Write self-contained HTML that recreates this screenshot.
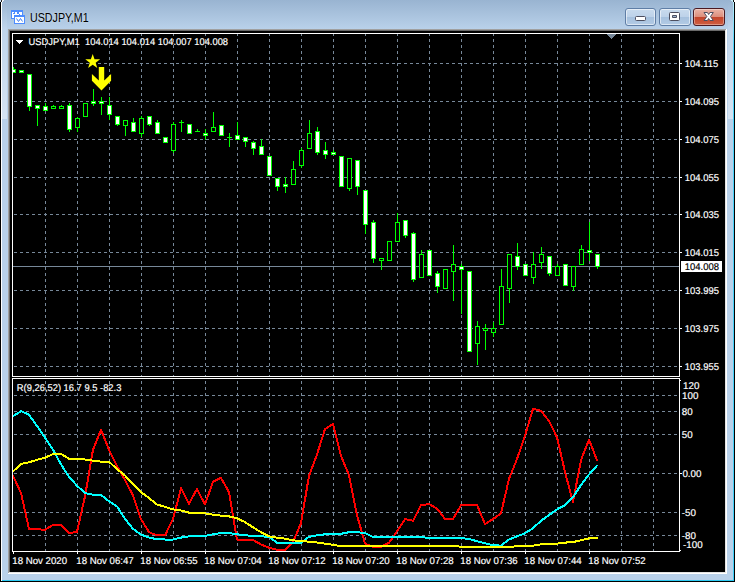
<!DOCTYPE html>
<html><head><meta charset="utf-8"><title>USDJPY,M1</title>
<style>
html,body{margin:0;padding:0;background:#fff;}
body{width:737px;height:583px;overflow:hidden;position:relative;font-family:"Liberation Sans",sans-serif;}
#win{position:absolute;left:0;top:0;width:735px;height:582px;background:#000;}
#frame{position:absolute;left:1px;top:0;width:733px;height:581px;background:#b9d1ea;}
#cap{position:absolute;left:0;top:0;width:733px;height:29px;background:linear-gradient(#99b4d1,#b9d1ea);}
#hl{position:absolute;left:0;top:0;width:1px;height:581px;background:#fff;}
#hr{position:absolute;right:0;top:0;width:1px;height:581px;background:linear-gradient(#c4f1fd 0px,#4ad4fb 45px,#3fcff8 100%);}
.gl{position:absolute;top:0;width:5px;height:119px;background:linear-gradient(rgba(255,255,255,0),rgba(255,255,255,.4));}
#hb{position:absolute;left:1px;bottom:0;width:732px;height:1px;background:#2ccaf2;}
#title{position:absolute;left:30px;top:9.5px;font-size:12.5px;line-height:16px;color:#000;white-space:nowrap;transform:scaleX(0.855);transform-origin:0 0;text-shadow:0 0 3px rgba(255,255,255,.6);}
.btn{position:absolute;top:8px;height:16px;width:29px;border:1px solid #5f7ea6;border-radius:3px;box-shadow:inset 0 0 0 1px rgba(255,255,255,.55);}
#bmin,#bmax{background:linear-gradient(#c9dbee 0%,#bdd2e9 48%,#a6c1de 52%,#b3cbe5 100%);}
#bmin{left:625px;} #bmax{left:659px;width:30px;}
#bcl{left:693px;width:30px;border-color:#4b1a22;background:linear-gradient(#eab4a6 0%,#dd8f7d 48%,#c4452b 52%,#cf5f42 100%);box-shadow:inset 0 0 0 1px rgba(255,255,255,.35);}
#edge{position:absolute;left:8px;top:29px;width:719px;height:545px;background:#fff;}
#e1{position:absolute;left:0;top:0;width:718px;height:544px;background:#a0a0a0;}
#e2{position:absolute;left:1px;top:1px;width:717px;height:543px;background:#e3e3e3;}
#e3{position:absolute;left:1px;top:1px;width:716px;height:542px;background:#696969;}
#cl{position:absolute;left:2px;top:2px;width:715px;height:541px;background:#000;}
svg{position:absolute;left:0;top:0;}
</style></head><body>
<div id="win"><div id="frame"><div id="cap"></div><div id="hl"></div><div id="hr"></div><div id="hb"></div><div class="gl" style="left:1px"></div><div class="gl" style="left:727px"></div></div>
<div id="edge"><div id="e1"></div><div id="e2"></div><div id="e3"></div><div id="cl"></div></div>
<div id="title">USDJPY,M1</div>
<div class="btn" id="bmin"></div><div class="btn" id="bmax"></div><div class="btn" id="bcl"></div>
</div>
<svg width="737" height="583" viewBox="0 0 737 583">
<defs><clipPath id="cm"><rect x="13" y="34" width="666" height="342"/></clipPath>
<clipPath id="cs"><rect x="13" y="379" width="666" height="172"/></clipPath></defs>
<g shape-rendering="crispEdges"><rect x="0" y="0" width="1" height="2" fill="#cfe3f7"/><rect x="1" y="0" width="1" height="2" fill="#222"/><rect x="2" y="0" width="2" height="1" fill="#e8eef5"/><rect x="2" y="1" width="1" height="1" fill="#fff"/>
<rect x="733" y="0" width="1" height="2" fill="#111"/><rect x="734" y="0" width="1" height="2" fill="#fff"/><rect x="731" y="0" width="2" height="1" fill="#c8f0fb"/><rect x="732" y="1" width="1" height="1" fill="#c8f0fb"/></g>
<g shape-rendering="crispEdges">
<rect x="11" y="10" width="12" height="9" fill="#4d8dff"/><rect x="12" y="12" width="10" height="6" fill="#fff"/>
<rect x="13" y="13" width="2" height="1" fill="#4d8dff"/><rect x="14" y="12" width="1" height="1" fill="#4d8dff"/><rect x="17" y="12" width="2" height="2" fill="#4d8dff"/><rect x="19" y="14" width="1" height="1" fill="#4d8dff"/>
<rect x="14" y="15" width="11" height="9" fill="#4d8dff"/><rect x="15" y="17" width="9" height="6" fill="#fff"/>
<path d="M16.5 18.5L18.5 21.5L20.5 18.5L22.5 21.5" stroke="#3f7df0" stroke-width="1" fill="none" shape-rendering="auto"/>
</g>
<g stroke-linejoin="round">
<rect x="635.5" y="16.5" width="10" height="4" rx="1" fill="#fff" stroke="#4d4f60" stroke-width="1"/>
<rect x="669.5" y="12.5" width="10" height="8" rx="1" fill="#fff" stroke="#4d4f60" stroke-width="1"/><rect x="672.5" y="15.5" width="4" height="2" fill="#9fb6d0" stroke="#4d4f60" stroke-width="1"/>
<polygon points="704,12.5 707.4,12.5 708.65,14.5 709.9,12.5 713.3,12.5 710.5,16.5 713.3,20.5 709.9,20.5 708.65,18.5 707.4,20.5 704,20.5 706.8,16.5" fill="#fff" stroke="#4d4f60" stroke-width="1"/>
</g>
<g shape-rendering="crispEdges">
<path d="M13 63.5H679" stroke="#778899" stroke-width="1" stroke-dasharray="3 3" stroke-dashoffset="5" fill="none"/>
<path d="M13 101.5H679" stroke="#778899" stroke-width="1" stroke-dasharray="3 3" stroke-dashoffset="5" fill="none"/>
<path d="M13 139.5H679" stroke="#778899" stroke-width="1" stroke-dasharray="3 3" stroke-dashoffset="5" fill="none"/>
<path d="M13 177.5H679" stroke="#778899" stroke-width="1" stroke-dasharray="3 3" stroke-dashoffset="5" fill="none"/>
<path d="M13 214.5H679" stroke="#778899" stroke-width="1" stroke-dasharray="3 3" stroke-dashoffset="5" fill="none"/>
<path d="M13 252.5H679" stroke="#778899" stroke-width="1" stroke-dasharray="3 3" stroke-dashoffset="5" fill="none"/>
<path d="M13 290.5H679" stroke="#778899" stroke-width="1" stroke-dasharray="3 3" stroke-dashoffset="5" fill="none"/>
<path d="M13 328.5H679" stroke="#778899" stroke-width="1" stroke-dasharray="3 3" stroke-dashoffset="5" fill="none"/>
<path d="M13 366.5H679" stroke="#778899" stroke-width="1" stroke-dasharray="3 3" stroke-dashoffset="5" fill="none"/>
<path d="M45.5 34V376" stroke="#778899" stroke-width="1" stroke-dasharray="3 3" stroke-dashoffset="1" fill="none"/>
<path d="M77.5 34V376" stroke="#778899" stroke-width="1" stroke-dasharray="3 3" stroke-dashoffset="1" fill="none"/>
<path d="M109.5 34V376" stroke="#778899" stroke-width="1" stroke-dasharray="3 3" stroke-dashoffset="1" fill="none"/>
<path d="M141.5 34V376" stroke="#778899" stroke-width="1" stroke-dasharray="3 3" stroke-dashoffset="1" fill="none"/>
<path d="M173.5 34V376" stroke="#778899" stroke-width="1" stroke-dasharray="3 3" stroke-dashoffset="1" fill="none"/>
<path d="M205.5 34V376" stroke="#778899" stroke-width="1" stroke-dasharray="3 3" stroke-dashoffset="1" fill="none"/>
<path d="M237.5 34V376" stroke="#778899" stroke-width="1" stroke-dasharray="3 3" stroke-dashoffset="1" fill="none"/>
<path d="M269.5 34V376" stroke="#778899" stroke-width="1" stroke-dasharray="3 3" stroke-dashoffset="1" fill="none"/>
<path d="M301.5 34V376" stroke="#778899" stroke-width="1" stroke-dasharray="3 3" stroke-dashoffset="1" fill="none"/>
<path d="M333.5 34V376" stroke="#778899" stroke-width="1" stroke-dasharray="3 3" stroke-dashoffset="1" fill="none"/>
<path d="M365.5 34V376" stroke="#778899" stroke-width="1" stroke-dasharray="3 3" stroke-dashoffset="1" fill="none"/>
<path d="M397.5 34V376" stroke="#778899" stroke-width="1" stroke-dasharray="3 3" stroke-dashoffset="1" fill="none"/>
<path d="M429.5 34V376" stroke="#778899" stroke-width="1" stroke-dasharray="3 3" stroke-dashoffset="1" fill="none"/>
<path d="M461.5 34V376" stroke="#778899" stroke-width="1" stroke-dasharray="3 3" stroke-dashoffset="1" fill="none"/>
<path d="M493.5 34V376" stroke="#778899" stroke-width="1" stroke-dasharray="3 3" stroke-dashoffset="1" fill="none"/>
<path d="M525.5 34V376" stroke="#778899" stroke-width="1" stroke-dasharray="3 3" stroke-dashoffset="1" fill="none"/>
<path d="M557.5 34V376" stroke="#778899" stroke-width="1" stroke-dasharray="3 3" stroke-dashoffset="1" fill="none"/>
<path d="M589.5 34V376" stroke="#778899" stroke-width="1" stroke-dasharray="3 3" stroke-dashoffset="1" fill="none"/>
<path d="M621.5 34V376" stroke="#778899" stroke-width="1" stroke-dasharray="3 3" stroke-dashoffset="1" fill="none"/>
<path d="M653.5 34V376" stroke="#778899" stroke-width="1" stroke-dasharray="3 3" stroke-dashoffset="1" fill="none"/>
<path d="M13 395.5H679" stroke="#778899" stroke-width="1" stroke-dasharray="3 3" stroke-dashoffset="5" fill="none"/>
<path d="M13 411.5H679" stroke="#778899" stroke-width="1" stroke-dasharray="3 3" stroke-dashoffset="5" fill="none"/>
<path d="M13 434.5H679" stroke="#778899" stroke-width="1" stroke-dasharray="3 3" stroke-dashoffset="5" fill="none"/>
<path d="M13 473.5H679" stroke="#778899" stroke-width="1" stroke-dasharray="3 3" stroke-dashoffset="5" fill="none"/>
<path d="M13 512.5H679" stroke="#778899" stroke-width="1" stroke-dasharray="3 3" stroke-dashoffset="5" fill="none"/>
<path d="M13 535.5H679" stroke="#778899" stroke-width="1" stroke-dasharray="3 3" stroke-dashoffset="5" fill="none"/>
<path d="M45.5 379V551" stroke="#778899" stroke-width="1" stroke-dasharray="3 3" stroke-dashoffset="4" fill="none"/>
<path d="M77.5 379V551" stroke="#778899" stroke-width="1" stroke-dasharray="3 3" stroke-dashoffset="4" fill="none"/>
<path d="M109.5 379V551" stroke="#778899" stroke-width="1" stroke-dasharray="3 3" stroke-dashoffset="4" fill="none"/>
<path d="M141.5 379V551" stroke="#778899" stroke-width="1" stroke-dasharray="3 3" stroke-dashoffset="4" fill="none"/>
<path d="M173.5 379V551" stroke="#778899" stroke-width="1" stroke-dasharray="3 3" stroke-dashoffset="4" fill="none"/>
<path d="M205.5 379V551" stroke="#778899" stroke-width="1" stroke-dasharray="3 3" stroke-dashoffset="4" fill="none"/>
<path d="M237.5 379V551" stroke="#778899" stroke-width="1" stroke-dasharray="3 3" stroke-dashoffset="4" fill="none"/>
<path d="M269.5 379V551" stroke="#778899" stroke-width="1" stroke-dasharray="3 3" stroke-dashoffset="4" fill="none"/>
<path d="M301.5 379V551" stroke="#778899" stroke-width="1" stroke-dasharray="3 3" stroke-dashoffset="4" fill="none"/>
<path d="M333.5 379V551" stroke="#778899" stroke-width="1" stroke-dasharray="3 3" stroke-dashoffset="4" fill="none"/>
<path d="M365.5 379V551" stroke="#778899" stroke-width="1" stroke-dasharray="3 3" stroke-dashoffset="4" fill="none"/>
<path d="M397.5 379V551" stroke="#778899" stroke-width="1" stroke-dasharray="3 3" stroke-dashoffset="4" fill="none"/>
<path d="M429.5 379V551" stroke="#778899" stroke-width="1" stroke-dasharray="3 3" stroke-dashoffset="4" fill="none"/>
<path d="M461.5 379V551" stroke="#778899" stroke-width="1" stroke-dasharray="3 3" stroke-dashoffset="4" fill="none"/>
<path d="M493.5 379V551" stroke="#778899" stroke-width="1" stroke-dasharray="3 3" stroke-dashoffset="4" fill="none"/>
<path d="M525.5 379V551" stroke="#778899" stroke-width="1" stroke-dasharray="3 3" stroke-dashoffset="4" fill="none"/>
<path d="M557.5 379V551" stroke="#778899" stroke-width="1" stroke-dasharray="3 3" stroke-dashoffset="4" fill="none"/>
<path d="M589.5 379V551" stroke="#778899" stroke-width="1" stroke-dasharray="3 3" stroke-dashoffset="4" fill="none"/>
<path d="M621.5 379V551" stroke="#778899" stroke-width="1" stroke-dasharray="3 3" stroke-dashoffset="4" fill="none"/>
<path d="M653.5 379V551" stroke="#778899" stroke-width="1" stroke-dasharray="3 3" stroke-dashoffset="4" fill="none"/>
<rect x="13" y="266" width="666" height="1" fill="#778899"/>
<g clip-path="url(#cm)">
<rect x="13" y="67" width="1" height="6" fill="#00ff00"/>
<rect x="11" y="69" width="5" height="4" fill="#00ff00"/>
<rect x="12" y="70" width="3" height="2" fill="#fff"/>
<rect x="21" y="70" width="1" height="3" fill="#00ff00"/>
<rect x="19" y="70" width="5" height="3" fill="#00ff00"/>
<rect x="20" y="71" width="3" height="1" fill="#fff"/>
<rect x="29" y="74" width="1" height="37" fill="#00ff00"/>
<rect x="27" y="74" width="5" height="33" fill="#00ff00"/>
<rect x="28" y="75" width="3" height="31" fill="#fff"/>
<rect x="37" y="105" width="1" height="21" fill="#00ff00"/>
<rect x="35" y="105" width="5" height="4" fill="#00ff00"/>
<rect x="36" y="106" width="3" height="2" fill="#fff"/>
<rect x="45" y="103" width="1" height="8" fill="#00ff00"/>
<rect x="43" y="106" width="5" height="5" fill="#00ff00"/>
<rect x="44" y="107" width="3" height="3" fill="#fff"/>
<rect x="53" y="105" width="1" height="4" fill="#00ff00"/>
<rect x="51" y="106" width="5" height="3" fill="#00ff00"/>
<rect x="52" y="107" width="3" height="1" fill="#000"/>
<rect x="61" y="105" width="1" height="4" fill="#00ff00"/>
<rect x="59" y="106" width="5" height="3" fill="#00ff00"/>
<rect x="60" y="107" width="3" height="1" fill="#000"/>
<rect x="69" y="103" width="1" height="29" fill="#00ff00"/>
<rect x="67" y="105" width="5" height="25" fill="#00ff00"/>
<rect x="68" y="106" width="3" height="23" fill="#fff"/>
<rect x="77" y="117" width="1" height="15" fill="#00ff00"/>
<rect x="75" y="118" width="5" height="10" fill="#00ff00"/>
<rect x="76" y="119" width="3" height="8" fill="#000"/>
<rect x="85" y="103" width="1" height="14" fill="#00ff00"/>
<rect x="83" y="103" width="5" height="14" fill="#00ff00"/>
<rect x="84" y="104" width="3" height="12" fill="#000"/>
<rect x="93" y="89" width="1" height="17" fill="#00ff00"/>
<rect x="91" y="101" width="5" height="3" fill="#00ff00"/>
<rect x="92" y="102" width="3" height="1" fill="#fff"/>
<rect x="101" y="97" width="1" height="18" fill="#00ff00"/>
<rect x="99" y="101" width="5" height="3" fill="#00ff00"/>
<rect x="100" y="102" width="3" height="1" fill="#fff"/>
<rect x="109" y="97" width="1" height="23" fill="#00ff00"/>
<rect x="107" y="105" width="5" height="10" fill="#00ff00"/>
<rect x="108" y="106" width="3" height="8" fill="#fff"/>
<rect x="117" y="116" width="1" height="10" fill="#00ff00"/>
<rect x="115" y="116" width="5" height="9" fill="#00ff00"/>
<rect x="116" y="117" width="3" height="7" fill="#fff"/>
<rect x="125" y="120" width="1" height="16" fill="#00ff00"/>
<rect x="123" y="120" width="5" height="6" fill="#00ff00"/>
<rect x="124" y="121" width="3" height="4" fill="#000"/>
<rect x="133" y="118" width="1" height="14" fill="#00ff00"/>
<rect x="131" y="122" width="5" height="10" fill="#00ff00"/>
<rect x="132" y="123" width="3" height="8" fill="#fff"/>
<rect x="141" y="116" width="1" height="21" fill="#00ff00"/>
<rect x="139" y="118" width="5" height="16" fill="#00ff00"/>
<rect x="140" y="119" width="3" height="14" fill="#000"/>
<rect x="149" y="116" width="1" height="10" fill="#00ff00"/>
<rect x="147" y="116" width="5" height="9" fill="#00ff00"/>
<rect x="148" y="117" width="3" height="7" fill="#fff"/>
<rect x="157" y="120" width="1" height="14" fill="#00ff00"/>
<rect x="155" y="122" width="5" height="12" fill="#00ff00"/>
<rect x="156" y="123" width="3" height="10" fill="#fff"/>
<rect x="165" y="137" width="1" height="6" fill="#00ff00"/>
<rect x="163" y="137" width="5" height="6" fill="#00ff00"/>
<rect x="164" y="138" width="3" height="4" fill="#fff"/>
<rect x="173" y="122" width="1" height="31" fill="#00ff00"/>
<rect x="171" y="124" width="5" height="27" fill="#00ff00"/>
<rect x="172" y="125" width="3" height="25" fill="#000"/>
<rect x="181" y="120" width="1" height="12" fill="#00ff00"/>
<rect x="179" y="122" width="5" height="1" fill="#00ff00"/>
<rect x="189" y="124" width="1" height="10" fill="#00ff00"/>
<rect x="187" y="124" width="5" height="10" fill="#00ff00"/>
<rect x="188" y="125" width="3" height="8" fill="#fff"/>
<rect x="197" y="129" width="1" height="3" fill="#00ff00"/>
<rect x="195" y="131" width="5" height="1" fill="#00ff00"/>
<rect x="205" y="129" width="1" height="11" fill="#00ff00"/>
<rect x="203" y="133" width="5" height="3" fill="#00ff00"/>
<rect x="204" y="134" width="3" height="1" fill="#fff"/>
<rect x="213" y="112" width="1" height="20" fill="#00ff00"/>
<rect x="211" y="127" width="5" height="5" fill="#00ff00"/>
<rect x="212" y="128" width="3" height="3" fill="#000"/>
<rect x="221" y="125" width="1" height="11" fill="#00ff00"/>
<rect x="219" y="125" width="5" height="11" fill="#00ff00"/>
<rect x="220" y="126" width="3" height="9" fill="#fff"/>
<rect x="229" y="133" width="1" height="14" fill="#00ff00"/>
<rect x="227" y="137" width="5" height="1" fill="#00ff00"/>
<rect x="237" y="122" width="1" height="18" fill="#00ff00"/>
<rect x="235" y="135" width="5" height="5" fill="#00ff00"/>
<rect x="236" y="136" width="3" height="3" fill="#fff"/>
<rect x="245" y="137" width="1" height="10" fill="#00ff00"/>
<rect x="243" y="137" width="5" height="5" fill="#00ff00"/>
<rect x="244" y="138" width="3" height="3" fill="#fff"/>
<rect x="253" y="141" width="1" height="14" fill="#00ff00"/>
<rect x="251" y="142" width="5" height="7" fill="#00ff00"/>
<rect x="252" y="143" width="3" height="5" fill="#fff"/>
<rect x="261" y="139" width="1" height="16" fill="#00ff00"/>
<rect x="259" y="146" width="5" height="9" fill="#00ff00"/>
<rect x="260" y="147" width="3" height="7" fill="#fff"/>
<rect x="269" y="156" width="1" height="20" fill="#00ff00"/>
<rect x="267" y="156" width="5" height="20" fill="#00ff00"/>
<rect x="268" y="157" width="3" height="18" fill="#fff"/>
<rect x="277" y="178" width="1" height="13" fill="#00ff00"/>
<rect x="275" y="178" width="5" height="9" fill="#00ff00"/>
<rect x="276" y="179" width="3" height="7" fill="#fff"/>
<rect x="285" y="177" width="1" height="16" fill="#00ff00"/>
<rect x="283" y="184" width="5" height="3" fill="#00ff00"/>
<rect x="284" y="185" width="3" height="1" fill="#fff"/>
<rect x="293" y="161" width="1" height="24" fill="#00ff00"/>
<rect x="291" y="169" width="5" height="16" fill="#00ff00"/>
<rect x="292" y="170" width="3" height="14" fill="#000"/>
<rect x="301" y="148" width="1" height="20" fill="#00ff00"/>
<rect x="299" y="150" width="5" height="16" fill="#00ff00"/>
<rect x="300" y="151" width="3" height="14" fill="#000"/>
<rect x="309" y="120" width="1" height="29" fill="#00ff00"/>
<rect x="307" y="133" width="5" height="16" fill="#00ff00"/>
<rect x="308" y="134" width="3" height="14" fill="#000"/>
<rect x="317" y="127" width="1" height="28" fill="#00ff00"/>
<rect x="315" y="131" width="5" height="22" fill="#00ff00"/>
<rect x="316" y="132" width="3" height="20" fill="#fff"/>
<rect x="325" y="142" width="1" height="17" fill="#00ff00"/>
<rect x="323" y="150" width="5" height="5" fill="#00ff00"/>
<rect x="324" y="151" width="3" height="3" fill="#fff"/>
<rect x="333" y="150" width="1" height="5" fill="#00ff00"/>
<rect x="331" y="152" width="5" height="3" fill="#00ff00"/>
<rect x="332" y="153" width="3" height="1" fill="#fff"/>
<rect x="341" y="156" width="1" height="31" fill="#00ff00"/>
<rect x="339" y="156" width="5" height="31" fill="#00ff00"/>
<rect x="340" y="157" width="3" height="29" fill="#fff"/>
<rect x="349" y="158" width="1" height="33" fill="#00ff00"/>
<rect x="347" y="158" width="5" height="31" fill="#00ff00"/>
<rect x="348" y="159" width="3" height="29" fill="#000"/>
<rect x="357" y="160" width="1" height="35" fill="#00ff00"/>
<rect x="355" y="160" width="5" height="27" fill="#00ff00"/>
<rect x="356" y="161" width="3" height="25" fill="#fff"/>
<rect x="365" y="190" width="1" height="44" fill="#00ff00"/>
<rect x="363" y="190" width="5" height="35" fill="#00ff00"/>
<rect x="364" y="191" width="3" height="33" fill="#fff"/>
<rect x="373" y="220" width="1" height="43" fill="#00ff00"/>
<rect x="371" y="222" width="5" height="37" fill="#00ff00"/>
<rect x="372" y="223" width="3" height="35" fill="#fff"/>
<rect x="381" y="258" width="1" height="12" fill="#00ff00"/>
<rect x="379" y="258" width="5" height="3" fill="#00ff00"/>
<rect x="380" y="259" width="3" height="1" fill="#000"/>
<rect x="389" y="241" width="1" height="20" fill="#00ff00"/>
<rect x="387" y="241" width="5" height="20" fill="#00ff00"/>
<rect x="388" y="242" width="3" height="18" fill="#000"/>
<rect x="397" y="213" width="1" height="29" fill="#00ff00"/>
<rect x="395" y="222" width="5" height="20" fill="#00ff00"/>
<rect x="396" y="223" width="3" height="18" fill="#000"/>
<rect x="405" y="220" width="1" height="18" fill="#00ff00"/>
<rect x="403" y="220" width="5" height="16" fill="#00ff00"/>
<rect x="404" y="221" width="3" height="14" fill="#fff"/>
<rect x="413" y="232" width="1" height="50" fill="#00ff00"/>
<rect x="411" y="233" width="5" height="47" fill="#00ff00"/>
<rect x="412" y="234" width="3" height="45" fill="#fff"/>
<rect x="421" y="250" width="1" height="28" fill="#00ff00"/>
<rect x="419" y="254" width="5" height="24" fill="#00ff00"/>
<rect x="420" y="255" width="3" height="22" fill="#000"/>
<rect x="429" y="250" width="1" height="26" fill="#00ff00"/>
<rect x="427" y="250" width="5" height="26" fill="#00ff00"/>
<rect x="428" y="251" width="3" height="24" fill="#fff"/>
<rect x="437" y="271" width="1" height="22" fill="#00ff00"/>
<rect x="435" y="273" width="5" height="14" fill="#00ff00"/>
<rect x="436" y="274" width="3" height="12" fill="#fff"/>
<rect x="445" y="269" width="1" height="20" fill="#00ff00"/>
<rect x="443" y="269" width="5" height="20" fill="#00ff00"/>
<rect x="444" y="270" width="3" height="18" fill="#000"/>
<rect x="453" y="245" width="1" height="56" fill="#00ff00"/>
<rect x="451" y="264" width="5" height="8" fill="#00ff00"/>
<rect x="452" y="265" width="3" height="6" fill="#000"/>
<rect x="461" y="264" width="1" height="50" fill="#00ff00"/>
<rect x="459" y="266" width="5" height="4" fill="#00ff00"/>
<rect x="460" y="267" width="3" height="2" fill="#fff"/>
<rect x="469" y="271" width="1" height="81" fill="#00ff00"/>
<rect x="467" y="271" width="5" height="81" fill="#00ff00"/>
<rect x="468" y="272" width="3" height="79" fill="#fff"/>
<rect x="477" y="321" width="1" height="44" fill="#00ff00"/>
<rect x="475" y="326" width="5" height="18" fill="#00ff00"/>
<rect x="476" y="327" width="3" height="16" fill="#000"/>
<rect x="485" y="324" width="1" height="26" fill="#00ff00"/>
<rect x="483" y="328" width="5" height="3" fill="#00ff00"/>
<rect x="484" y="329" width="3" height="1" fill="#000"/>
<rect x="493" y="322" width="1" height="15" fill="#00ff00"/>
<rect x="491" y="328" width="5" height="5" fill="#00ff00"/>
<rect x="492" y="329" width="3" height="3" fill="#000"/>
<rect x="501" y="269" width="1" height="56" fill="#00ff00"/>
<rect x="499" y="286" width="5" height="39" fill="#00ff00"/>
<rect x="500" y="287" width="3" height="37" fill="#000"/>
<rect x="509" y="254" width="1" height="49" fill="#00ff00"/>
<rect x="507" y="254" width="5" height="35" fill="#00ff00"/>
<rect x="508" y="255" width="3" height="33" fill="#000"/>
<rect x="517" y="243" width="1" height="27" fill="#00ff00"/>
<rect x="515" y="256" width="5" height="11" fill="#00ff00"/>
<rect x="516" y="257" width="3" height="9" fill="#fff"/>
<rect x="525" y="264" width="1" height="12" fill="#00ff00"/>
<rect x="523" y="264" width="5" height="12" fill="#00ff00"/>
<rect x="524" y="265" width="3" height="10" fill="#fff"/>
<rect x="533" y="252" width="1" height="32" fill="#00ff00"/>
<rect x="531" y="264" width="5" height="14" fill="#00ff00"/>
<rect x="532" y="265" width="3" height="12" fill="#000"/>
<rect x="541" y="247" width="1" height="22" fill="#00ff00"/>
<rect x="539" y="254" width="5" height="9" fill="#00ff00"/>
<rect x="540" y="255" width="3" height="7" fill="#000"/>
<rect x="549" y="256" width="1" height="20" fill="#00ff00"/>
<rect x="547" y="256" width="5" height="18" fill="#00ff00"/>
<rect x="548" y="257" width="3" height="16" fill="#fff"/>
<rect x="557" y="264" width="1" height="12" fill="#00ff00"/>
<rect x="555" y="266" width="5" height="10" fill="#00ff00"/>
<rect x="556" y="267" width="3" height="8" fill="#000"/>
<rect x="565" y="264" width="1" height="22" fill="#00ff00"/>
<rect x="563" y="264" width="5" height="22" fill="#00ff00"/>
<rect x="564" y="265" width="3" height="20" fill="#fff"/>
<rect x="573" y="266" width="1" height="25" fill="#00ff00"/>
<rect x="571" y="266" width="5" height="21" fill="#00ff00"/>
<rect x="572" y="267" width="3" height="19" fill="#000"/>
<rect x="581" y="245" width="1" height="20" fill="#00ff00"/>
<rect x="579" y="249" width="5" height="16" fill="#00ff00"/>
<rect x="580" y="250" width="3" height="14" fill="#000"/>
<rect x="589" y="222" width="1" height="39" fill="#00ff00"/>
<rect x="587" y="250" width="5" height="3" fill="#00ff00"/>
<rect x="588" y="251" width="3" height="1" fill="#fff"/>
<rect x="597" y="254" width="1" height="15" fill="#00ff00"/>
<rect x="595" y="254" width="5" height="13" fill="#00ff00"/>
<rect x="596" y="255" width="3" height="11" fill="#fff"/>
</g>
<g clip-path="url(#cs)">
<polyline points="13,475.9 21,493.0 29,528.9 37,529.3 45,529.7 53,524.9 61,524.9 69,533.0 77,531.9 85,496.3 93,449.7 101,429.8 109,449.7 117,466.0 125,480.0 133,495.5 141,519.1 149,532.2 157,535.4 165,535.4 173,519.1 181,488.2 189,503.7 197,489.0 205,504.5 213,481.6 221,477.9 229,492.2 237,539.5 245,540.0 253,540.0 261,544.4 269,547.7 277,549.8 285,549.8 293,542.0 301,523.2 309,475.8 317,454.4 325,429.1 333,423.9 341,456.0 349,475.0 357,515.1 365,543.6 373,546.9 381,546.9 389,542.8 397,531.4 405,519.1 413,520.8 421,505.3 429,504.0 437,508.5 445,519.1 453,519.1 461,505.3 469,505.0 477,505.0 485,524.0 493,519.1 501,513.4 509,479.0 517,459.0 525,435.7 533,408.8 541,410.9 549,421.0 557,437.3 565,472.0 573,502.0 581,460.1 589,439.7 597,460.1" fill="none" stroke="#ff0000" stroke-width="2" stroke-linejoin="round" stroke-linecap="round"/>
<polyline points="13,416.3 21,411.1 29,414.7 37,426.0 45,437.5 53,449.7 61,464.4 69,476.8 77,485.7 85,493.0 93,494.7 101,495.0 109,501.2 117,506.4 125,518.7 133,528.9 141,534.6 149,537.6 157,539.2 165,539.5 173,539.5 181,537.6 189,536.3 197,535.9 205,535.9 213,534.3 221,533.0 229,533.0 237,534.3 245,535.1 253,536.3 261,536.3 269,536.8 277,542.8 285,542.8 293,542.8 301,542.8 309,536.8 317,535.4 325,534.3 333,533.8 341,533.8 349,532.2 357,532.2 365,533.0 373,537.1 381,537.1 389,537.1 397,537.1 405,537.1 413,537.1 421,537.1 429,537.9 437,537.9 445,537.9 453,537.9 461,537.9 469,539.0 477,541.2 485,543.3 493,545.2 501,545.6 509,539.5 517,536.3 525,533.3 533,528.1 541,520.8 549,515.1 557,509.4 565,505.3 573,497.1 581,485.0 589,474.5 597,465.5" fill="none" stroke="#00ffff" stroke-width="2" stroke-linejoin="round" stroke-linecap="round"/>
<polyline points="13,471.5 21,464.0 29,462.3 37,459.8 45,457.7 53,454.1 61,453.8 69,458.7 77,458.7 85,459.5 93,460.7 101,461.6 109,461.8 117,469.0 125,475.5 133,484.1 141,492.2 149,498.0 157,504.5 165,506.9 173,509.4 181,510.5 189,512.6 197,513.1 205,513.4 213,514.6 221,515.6 229,516.4 237,518.3 245,522.1 253,527.3 261,532.2 269,536.3 277,537.6 285,538.7 293,540.3 301,541.2 309,541.6 317,542.5 325,543.6 333,544.9 341,546.0 349,546.0 357,546.0 365,546.0 373,546.0 381,546.0 389,546.0 397,546.0 405,546.0 413,546.0 421,546.0 429,546.0 437,546.0 445,546.0 453,546.0 461,546.7 469,547.2 477,547.2 485,547.2 493,547.2 501,547.2 509,547.2 517,546.0 525,546.0 533,545.7 541,544.4 549,544.1 557,543.6 565,542.6 573,542.1 581,540.3 589,538.4 597,537.9" fill="none" stroke="#ffff00" stroke-width="2" stroke-linejoin="round" stroke-linecap="round"/>
</g>
<rect x="12" y="33" width="668" height="1" fill="#fff"/>
<rect x="12" y="376" width="668" height="1" fill="#fff"/>
<rect x="12" y="33" width="1" height="344" fill="#fff"/>
<rect x="679" y="33" width="1" height="344" fill="#fff"/>
<rect x="12" y="378" width="668" height="1" fill="#fff"/>
<rect x="12" y="551" width="668" height="1" fill="#fff"/>
<rect x="12" y="378" width="1" height="174" fill="#fff"/>
<rect x="679" y="378" width="1" height="174" fill="#fff"/>
<rect x="680" y="63" width="2" height="1" fill="#fff"/>
<rect x="680" y="101" width="2" height="1" fill="#fff"/>
<rect x="680" y="139" width="2" height="1" fill="#fff"/>
<rect x="680" y="177" width="2" height="1" fill="#fff"/>
<rect x="680" y="214" width="2" height="1" fill="#fff"/>
<rect x="680" y="252" width="2" height="1" fill="#fff"/>
<rect x="680" y="290" width="2" height="1" fill="#fff"/>
<rect x="680" y="328" width="2" height="1" fill="#fff"/>
<rect x="680" y="366" width="2" height="1" fill="#fff"/>
<rect x="680" y="473" width="2" height="1" fill="#fff"/>
<rect x="680" y="380" width="1" height="1" fill="#fff"/>
<rect x="680" y="550" width="1" height="1" fill="#fff"/>
<rect x="13" y="552" width="1" height="2" fill="#fff"/>
<rect x="77" y="552" width="1" height="2" fill="#fff"/>
<rect x="141" y="552" width="1" height="2" fill="#fff"/>
<rect x="205" y="552" width="1" height="2" fill="#fff"/>
<rect x="269" y="552" width="1" height="2" fill="#fff"/>
<rect x="333" y="552" width="1" height="2" fill="#fff"/>
<rect x="397" y="552" width="1" height="2" fill="#fff"/>
<rect x="461" y="552" width="1" height="2" fill="#fff"/>
<rect x="525" y="552" width="1" height="2" fill="#fff"/>
<rect x="589" y="552" width="1" height="2" fill="#fff"/>
<rect x="681" y="261" width="41" height="11" fill="#fff"/>
<rect x="607" y="34" width="9" height="1" fill="#778899"/>
<rect x="608" y="35" width="7" height="1" fill="#778899"/>
<rect x="609" y="36" width="5" height="1" fill="#778899"/>
<rect x="610" y="37" width="3" height="1" fill="#778899"/>
<rect x="611" y="38" width="1" height="1" fill="#778899"/>
<rect x="16" y="40" width="7" height="1" fill="#fff"/>
<rect x="17" y="41" width="5" height="1" fill="#fff"/>
<rect x="18" y="42" width="3" height="1" fill="#fff"/>
<rect x="19" y="43" width="1" height="1" fill="#fff"/>
</g>
<polygon points="92.70,53.90 94.52,59.19 100.12,59.29 95.65,62.66 97.28,68.01 92.70,64.80 88.12,68.01 89.75,62.66 85.28,59.29 90.88,59.19" fill="#ffff00"/>
<polygon points="98.8,67 104.2,67 104.2,80.4 111.1,74 111.1,80.8 101.5,90.6 91.9,80.8 91.9,74 98.8,80.4" fill="#ffff00"/>
<g font-family="'Liberation Sans', sans-serif" font-size="9.8px" text-rendering="geometricPrecision">
<text transform="translate(684.8 67) scale(0.965 1)" fill="#fff" stroke="#fff" stroke-width="0.18">104.115</text>
<text transform="translate(684.8 105) scale(0.965 1)" fill="#fff" stroke="#fff" stroke-width="0.18">104.095</text>
<text transform="translate(684.8 143) scale(0.965 1)" fill="#fff" stroke="#fff" stroke-width="0.18">104.075</text>
<text transform="translate(684.8 181) scale(0.965 1)" fill="#fff" stroke="#fff" stroke-width="0.18">104.055</text>
<text transform="translate(684.8 218) scale(0.965 1)" fill="#fff" stroke="#fff" stroke-width="0.18">104.035</text>
<text transform="translate(684.8 256) scale(0.965 1)" fill="#fff" stroke="#fff" stroke-width="0.18">104.015</text>
<text transform="translate(684.8 294) scale(0.965 1)" fill="#fff" stroke="#fff" stroke-width="0.18">103.995</text>
<text transform="translate(684.8 332) scale(0.965 1)" fill="#fff" stroke="#fff" stroke-width="0.18">103.975</text>
<text transform="translate(684.8 370) scale(0.965 1)" fill="#fff" stroke="#fff" stroke-width="0.18">103.955</text>
<text transform="translate(684.8 270) scale(0.965 1)" fill="#000" stroke="#000" stroke-width="0.18">104.008</text>
<text transform="translate(683 389) scale(1.0 1)" fill="#fff" stroke="#fff" stroke-width="0.18">120</text>
<text transform="translate(682.1 399) scale(1.0 1)" fill="#fff" stroke="#fff" stroke-width="0.18">100</text>
<text transform="translate(681.7 415) scale(1.0 1)" fill="#fff" stroke="#fff" stroke-width="0.18">80</text>
<text transform="translate(681.7 438) scale(1.0 1)" fill="#fff" stroke="#fff" stroke-width="0.18">50</text>
<text transform="translate(682.4 477) scale(1.0 1)" fill="#fff" stroke="#fff" stroke-width="0.18">0.00</text>
<text transform="translate(681.8 516) scale(1.0 1)" fill="#fff" stroke="#fff" stroke-width="0.18">-50</text>
<text transform="translate(681.8 539) scale(1.0 1)" fill="#fff" stroke="#fff" stroke-width="0.18">-80</text>
<text transform="translate(683 547.7) scale(1.0 1)" fill="#fff" stroke="#fff" stroke-width="0.18">-100</text>
<text transform="translate(12.3 564) scale(0.985 1)" fill="#fff" stroke="#fff" stroke-width="0.18">18 Nov 2020</text>
<text transform="translate(76.3 564) scale(0.985 1)" fill="#fff" stroke="#fff" stroke-width="0.18">18 Nov 06:47</text>
<text transform="translate(140.3 564) scale(0.985 1)" fill="#fff" stroke="#fff" stroke-width="0.18">18 Nov 06:55</text>
<text transform="translate(204.3 564) scale(0.985 1)" fill="#fff" stroke="#fff" stroke-width="0.18">18 Nov 07:04</text>
<text transform="translate(268.3 564) scale(0.985 1)" fill="#fff" stroke="#fff" stroke-width="0.18">18 Nov 07:12</text>
<text transform="translate(332.3 564) scale(0.985 1)" fill="#fff" stroke="#fff" stroke-width="0.18">18 Nov 07:20</text>
<text transform="translate(396.3 564) scale(0.985 1)" fill="#fff" stroke="#fff" stroke-width="0.18">18 Nov 07:28</text>
<text transform="translate(460.3 564) scale(0.985 1)" fill="#fff" stroke="#fff" stroke-width="0.18">18 Nov 07:36</text>
<text transform="translate(524.3 564) scale(0.985 1)" fill="#fff" stroke="#fff" stroke-width="0.18">18 Nov 07:44</text>
<text transform="translate(588.3 564) scale(0.985 1)" fill="#fff" stroke="#fff" stroke-width="0.18">18 Nov 07:52</text>
<text transform="translate(28.5 45) scale(0.955 1)" fill="#fff" stroke="#fff" stroke-width="0.18" xml:space="preserve">USDJPY,M1&#160;&#160;104.014 104.014 104.007 104.008</text>
<text transform="translate(16.8 391) scale(0.955 1)" fill="#fff" stroke="#fff" stroke-width="0.18">R(9,26,52) 16.7 9.5 -82.3</text>
</g>
</svg>
</body></html>
